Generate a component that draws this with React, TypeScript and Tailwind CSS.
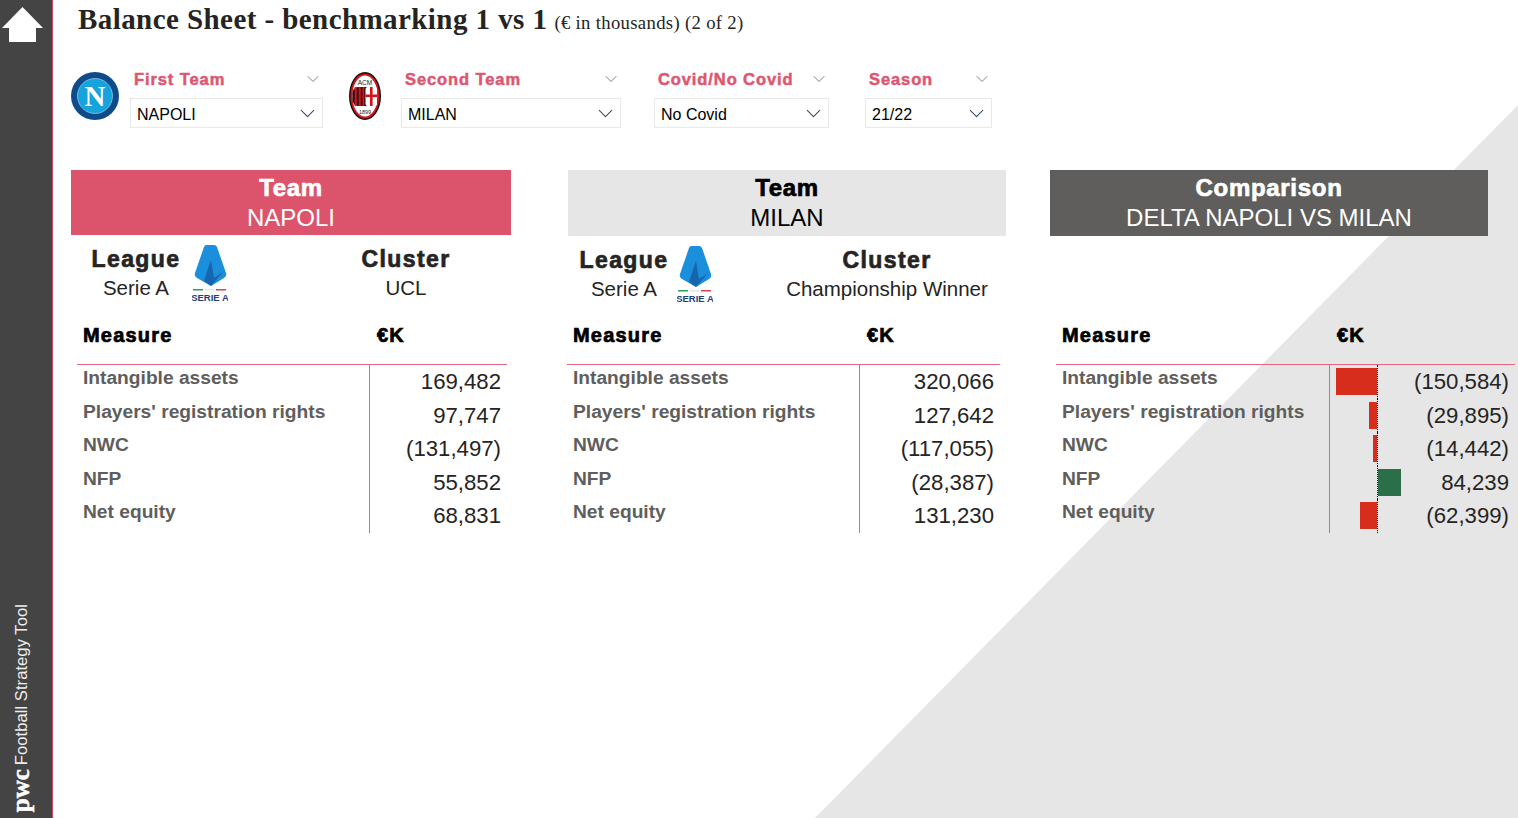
import { ChevronDown } from "lucide-react";

const SANS = "font-['Liberation_Sans',Arial,sans-serif]";
const HEAVY = "font-bold [-webkit-text-stroke:0.7px_currentColor]";

const measures = ["Intangible assets", "Players' registration rights", "NWC", "NFP", "Net equity"];
const napoli = ["169,482", "97,747", "(131,497)", "55,852", "68,831"];
const milan = ["320,066", "127,642", "(117,055)", "(28,387)", "131,230"];
const delta = [-150584, -29895, -14442, 84239, -62399];

const fmt = (v: number) => (v < 0 ? `(${Math.abs(v).toLocaleString("en-US")})` : v.toLocaleString("en-US"));

function HomeIcon() {
  return (
    <svg width="41" height="36" viewBox="0 0 41 36" className="block">
      <polygon points="20.5,0 41,21 34,21 34,35 7,35 7,21 0,21" fill="#fff" />
    </svg>
  );
}

function NapoliLogo() {
  return (
    <svg width="48" height="48" viewBox="0 0 48 48" className="shrink-0 block">
      <circle cx="24" cy="24" r="24" fill="#0f4a8a" />
      <circle cx="24" cy="24" r="17.5" fill="#16a3dc" stroke="#8fc7e8" strokeWidth="0.8" />
      <text x="24" y="34" textAnchor="middle" fontFamily="Liberation Serif, serif" fontWeight="700" fontSize="29" fill="#fff">
        N
      </text>
    </svg>
  );
}

function MilanLogo() {
  return (
    <svg width="32" height="48" viewBox="0 0 32 48" className="shrink-0 block">
      <ellipse cx="16" cy="24" rx="16" ry="24" fill="#111" />
      <ellipse cx="16" cy="24" rx="14.6" ry="22.6" fill="#d3141d" />
      <ellipse cx="16" cy="24" rx="12.6" ry="20.6" fill="#fff" />
      <text x="16" y="12.5" textAnchor="middle" fontFamily="Liberation Sans, sans-serif" fontSize="6.5" fill="#222">
        ACM
      </text>
      <text x="16" y="41.5" textAnchor="middle" fontFamily="Liberation Sans, sans-serif" fontSize="5.5" fill="#222">
        1899
      </text>
      <rect x="3.5" y="15" width="25" height="19" rx="6" fill="#111" />
      <rect x="5.6" y="15" width="2.2" height="19" fill="#d3141d" />
      <rect x="9.6" y="15" width="2.2" height="19" fill="#d3141d" />
      <rect x="13.4" y="15" width="2" height="19" fill="#d3141d" />
      <rect x="16.5" y="15" width="11.5" height="19" rx="2" fill="#fff" />
      <rect x="21" y="15" width="2.6" height="19" fill="#d3141d" />
      <rect x="16.5" y="22.5" width="11.5" height="2.6" fill="#d3141d" />
    </svg>
  );
}

function SerieALogo() {
  return (
    <svg width="36" height="57" viewBox="0 0 36 57" className="shrink-0 block">
      <path d="M14 0 L22 0 Q24 0 25 2 L34 28 Q35 31 32 33 L19 41 L5 33 Q2 31 3 28 L12 2 Q13 0 14 0Z" fill="#1b8fdc" />
      <path d="M19 15 L22 33 L31 27 L19 41 L12 36 Q15 26 19 15Z" fill="#1666ae" />
      <rect x="1" y="44" width="10" height="1.5" fill="#2f9e5b" />
      <rect x="13" y="44" width="9" height="1.5" fill="#e5e5e5" />
      <rect x="24" y="44" width="10" height="1.5" fill="#d9435a" />
      <text x="18" y="55.5" textAnchor="middle" fontFamily="Liberation Sans, sans-serif" fontWeight="700" fontSize="9.5" fill="#1f3f7a">
        SERIE A
      </text>
    </svg>
  );
}

function Filter({ label, value, boxClass }: { label: string; value: string; boxClass: string }) {
  return (
    <div className={boxClass}>
      <div className="flex items-center justify-between h-[28px] pb-[10px] pl-[4px] pr-[0px]">
        <span className="text-[16.5px] font-bold tracking-[0.9px] text-[#dd5770] [-webkit-text-stroke:0.5px_#dd5770]">{label}</span>
        <ChevronDown size={20} strokeWidth={1} className="text-[#5c6f7e]" />
      </div>
      <div className="flex items-center justify-between h-[30px] bg-white border border-[#e9e9e9] pl-[6px] pr-[2px] pt-[3px] text-[16px] text-black">
        <span>{value}</span>
        <ChevronDown size={25} strokeWidth={1} className="text-[#34495e] mt-[-2px]" />
      </div>
    </div>
  );
}

function PanelHeader({ title, sub, boxClass }: { title: string; sub: string; boxClass: string }) {
  return (
    <div className={`flex flex-col items-center justify-center text-[24px] leading-[30px] ${boxClass}`}>
      <div className={`tracking-[0.7px] ${HEAVY}`}>{title}</div>
      <div>{sub}</div>
    </div>
  );
}

function League({ padClass, logoClass, clusterClass, cluster }: { padClass: string; logoClass: string; clusterClass: string; cluster: string }) {
  return (
    <div className={`flex h-[76px] pt-[10px] ${padClass}`}>
      <div className="flex flex-col items-center text-[#252423] w-[90px]">
        <div className={`text-[23px] leading-[28px] tracking-[1.4px] ${HEAVY}`}>League</div>
        <div className="text-[20.5px] leading-[30px]">Serie A</div>
      </div>
      <div className={logoClass}>
        <SerieALogo />
      </div>
      <div className={`flex flex-col items-center text-[#252423] w-[210px] ${clusterClass}`}>
        <div className={`text-[23px] leading-[28px] tracking-[1.4px] ${HEAVY}`}>Cluster</div>
        <div className="text-[20.5px] leading-[30px]">{cluster}</div>
      </div>
    </div>
  );
}

function TableHead({ boxClass, labelClass }: { boxClass: string; labelClass: string }) {
  return (
    <div className={`flex h-[53px] pt-[9px] border-b border-[#e0677d] text-black text-[20px] leading-[28px] tracking-[1.2px] ${HEAVY} ${boxClass}`}>
      <div className={`pl-[6px] ${labelClass}`}>Measure</div>
      <div className="pl-[7px]">€K</div>
    </div>
  );
}

function Row({ label, value, labelClass }: { label: string; value: string; labelClass: string }) {
  return (
    <div className="flex h-[33.5px] items-center">
      <div className={`h-full border-r border-[#e0677d] pl-[6px] pb-[6px] flex items-center text-[19.2px] font-bold text-[#605e5c] ${labelClass}`}>
        {label}
      </div>
      <div className="flex-1 text-right pr-[6px] text-[22.2px] text-[#252423]">{value}</div>
    </div>
  );
}

function DeltaRow({ label, value }: { label: string; value: number }) {
  const w = Math.abs(value) * 0.000275;
  return (
    <div className="flex h-[33.5px] items-center">
      <div className="h-full w-[274px] border-r border-[#e0677d] pl-[6px] pb-[6px] flex items-center text-[19.2px] font-bold text-[#605e5c]">
        {label}
      </div>
      <div className="h-full w-[48px] border-r border-dotted border-black flex items-center justify-end">
        {value < 0 && <div className="h-[27px] bg-[#d62d1c]" style={{ width: w }} />}
      </div>
      <div className="h-full w-[24px] flex items-center">
        {value > 0 && <div className="h-[27px] bg-[#2a6f47]" style={{ width: w }} />}
      </div>
      <div className="flex-1 text-right pr-[6px] text-[22.2px] text-[#252423]">{fmt(value)}</div>
    </div>
  );
}

export default function App() {
  return (
    <div className={`relative flex h-[818px] w-[1518px] overflow-hidden bg-white ${SANS}`}>
      {/* grey diagonal behind the report */}
      <svg className="absolute inset-0" width="1518" height="818" viewBox="0 0 1518 818">
        <polygon points="1518,105 815,818 1518,818" fill="#e6e6e6" />
      </svg>

      <aside className="relative flex w-[53px] shrink-0 flex-col items-center justify-between bg-[#444444] border-r border-[#c9485f] pt-[7px] pb-[6px] pr-[8px]">
        <HomeIcon />
        <div className="rotate-180 [writing-mode:vertical-rl] flex items-center gap-[4px] text-[#ededed] text-[16.7px] leading-[18px] mr-[1px]">
          <span className="font-['Liberation_Serif',serif] font-bold text-[25px] text-white translate-x-[1px] [-webkit-text-stroke:0.5px_#fff]">pwc</span>
          <span>Football Strategy Tool</span>
        </div>
      </aside>

      <main className="relative flex-1 min-w-0">
        <h1 className="flex items-baseline gap-[7px] pl-[25px] h-[42px] leading-[38px] font-['Liberation_Serif',serif] text-[#252423]">
          <span className="text-[29px] font-bold tracking-[0.43px]">Balance Sheet - benchmarking 1 vs 1</span>
          <span className="text-[18.7px] tracking-[0.32px]">(€ in thousands) (2 of 2)</span>
        </h1>

        <div className="flex items-start h-[128px] pt-[28px] pl-[18px]">
          <div className="flex w-[270px] gap-[11px] pt-[2px]">
            <NapoliLogo />
            <div className="mt-[-2px] w-[193px]">
              <Filter label="First Team" value="NAPOLI" boxClass="w-[193px]" />
            </div>
          </div>
          <div className="flex gap-[20px] pt-[2px] ml-[8px]">
            <MilanLogo />
            <div className="mt-[-2px]">
              <Filter label="Second Team" value="MILAN" boxClass="w-[220px]" />
            </div>
          </div>
          <Filter label="Covid/No Covid" value="No Covid" boxClass="w-[175px] ml-[33px]" />
          <Filter label="Season" value="21/22" boxClass="w-[127px] ml-[36px]" />
        </div>

        <div className="flex pl-[18px]">
          <section className="w-[440px] shrink-0">
            <PanelHeader title="Team" sub="NAPOLI" boxClass="h-[65px] bg-[#db546b] text-white" />
            <League padClass="pl-[20px] h-[77px]" logoClass="ml-[11px]" clusterClass="ml-[73px]" cluster="UCL" />
            <TableHead boxClass="ml-[6px] w-[430px]" labelClass="w-[293px]" />
            <div className="ml-[6px] w-[430px]">
              {measures.map((m, i) => (
                <Row key={m} label={m} value={napoli[i]} labelClass="w-[293px]" />
              ))}
            </div>
          </section>

          <section className="w-[438px] shrink-0 ml-[57px]">
            <PanelHeader title="Team" sub="MILAN" boxClass="h-[66px] bg-[#e6e6e6] text-black" />
            <League padClass="pl-[11px]" logoClass="ml-[8px]" clusterClass="ml-[69px]" cluster="Championship Winner" />
            <TableHead boxClass="ml-[-1px] w-[433px]" labelClass="w-[293px]" />
            <div className="ml-[-1px] w-[433px]">
              {measures.map((m, i) => (
                <Row key={m} label={m} value={milan[i]} labelClass="w-[293px]" />
              ))}
            </div>
          </section>

          <section className="w-[438px] shrink-0 ml-[44px]">
            <PanelHeader title="Comparison" sub="DELTA NAPOLI VS MILAN" boxClass="h-[66px] bg-[#5f5e5c] text-white" />
            <div className="h-[76px]" />
            <TableHead boxClass="ml-[6px] w-[459px]" labelClass="w-[274px]" />
            <div className="ml-[6px] w-[459px]">
              {measures.map((m, i) => (
                <DeltaRow key={m} label={m} value={delta[i]} />
              ))}
            </div>
          </section>
        </div>
      </main>
    </div>
  );
}
